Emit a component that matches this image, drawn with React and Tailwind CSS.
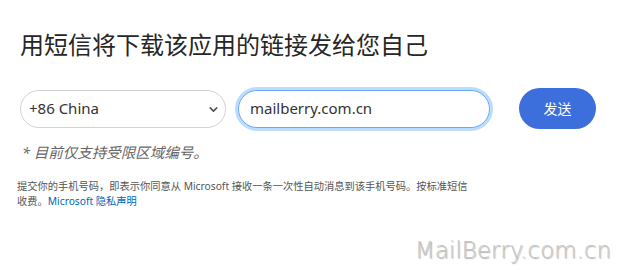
import { ChevronDown } from 'lucide-react';

const cjk = "font-['Noto_Sans','Noto_Sans_CJK_SC',sans-serif]";

export default function App() {
  return (
    <div className={`relative w-[618px] h-[270px] bg-white overflow-hidden ${cjk}`}>
      <div className="pl-5 pt-[27px]">
        {/* Heading */}
        <h1 className="text-[24px] leading-[36px] text-[#262626] font-normal">
          用短信将下载该应用的链接发给您自己
        </h1>

        {/* Phone row */}
        <div className="flex items-center mt-[25px]">
          <div className="relative w-[206px] h-[38px] rounded-full border border-[#d2d2d2] bg-white flex items-center pl-[8px]">
            <span className="text-[15px] text-[#333]">+86 China</span>
            <ChevronDown size={13} strokeWidth={3} className="absolute right-[5px] top-[12px] text-[#555]" />
          </div>
          <div className="ml-[12px] w-[252px] h-[38px] rounded-full border border-[#6aa9f5] ring-[3px] ring-[#bcdcff] bg-white flex items-center pl-[11px]">
            <span className="text-[15px] text-[#333]">mailberry.com.cn</span>
          </div>
          <button className="ml-[29px] w-[77px] h-[41px] rounded-full bg-[#3d6fdc] text-white text-[14px] flex items-center justify-center">
            发送
          </button>
        </div>

        {/* Note */}
        <p className="mt-[14px] pl-[2px] text-[14.5px] leading-[18px] italic text-[#666]">
          * 目前仅支持受限区域编号。
        </p>

        {/* Disclaimer */}
        <p className="mt-[18px] -ml-[3px] w-[460px] text-[10.25px] leading-[15px] text-[#555]">
          提交你的手机号码，即表示你同意从 Microsoft 接收一条一次性自动消息到该手机号码。按标准短信收费。
          <a className="text-[#0067b8]">Microsoft 隐私声明</a>
        </p>
      </div>

      {/* Watermark */}
      <div className="absolute right-[7px] bottom-[6px] font-['DejaVu_Sans',sans-serif] font-extralight text-[23px] leading-[28px] text-[#c8c8c8] [text-shadow:1px_1px_1px_rgba(0,0,0,0.3)]">
        MailBerry.com.cn
      </div>
    </div>
  );
}
